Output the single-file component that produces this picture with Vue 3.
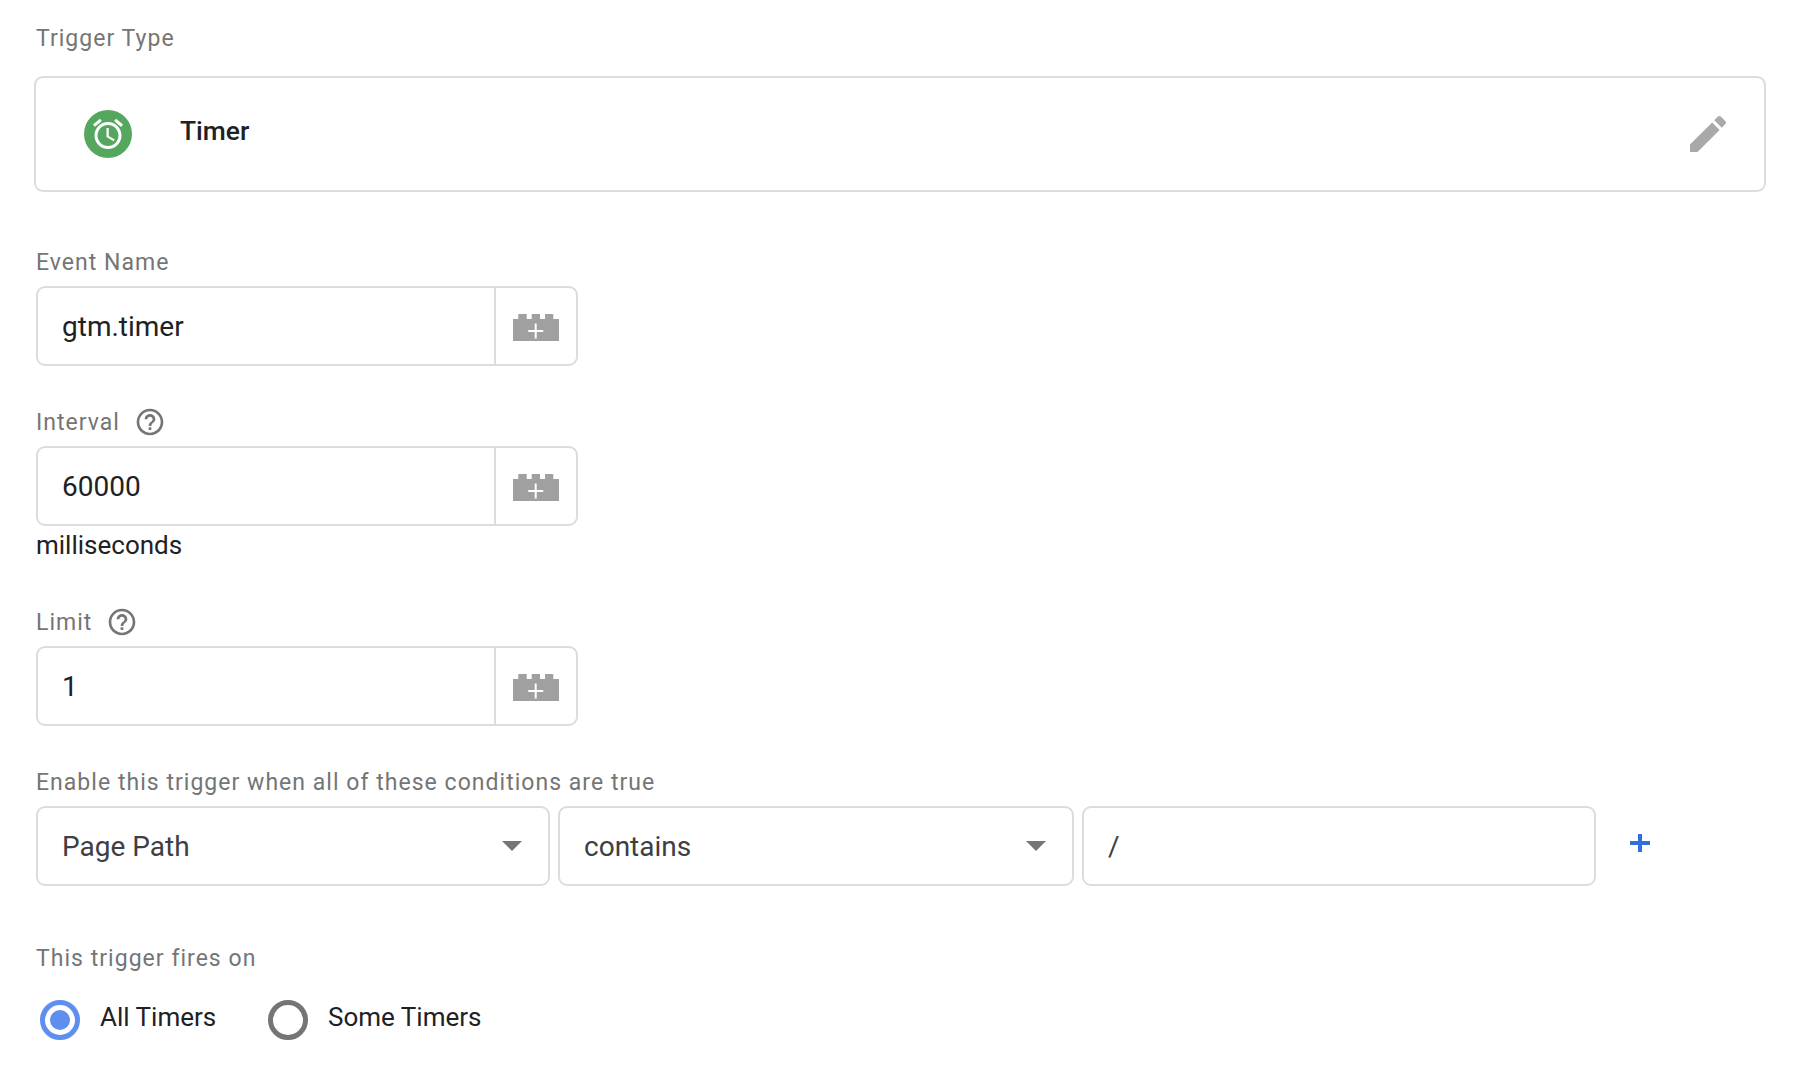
<script setup>
const helpPath = 'M11 18h2v-2h-2v2zm1-16C6.48 2 2 6.48 2 12s4.48 10 10 10 10-4.48 10-10S17.52 2 12 2zm0 18c-4.41 0-8-3.59-8-8s3.59-8 8-8 8 3.59 8 8-3.59 8-8 8zm0-14c-2.21 0-4 1.79-4 4h2c0-1.1.9-2 2-2s2 .9 2 2c0 2-3 1.75-3 5h2c0-2.25 3-2.5 3-5 0-2.21-1.79-4-4-4z'
const fields = [
  { key: 'event', label: 'Event Name', value: 'gtm.timer', help: false },
  { key: 'interval', label: 'Interval', value: '60000', help: true, note: 'milliseconds' },
  { key: 'limit', label: 'Limit', value: '1', help: true }
]
</script>

<template>
  <div class="page">
    <div class="label first">Trigger Type</div>
    <div class="card">
      <div class="badge">
        <svg width="36" height="36" viewBox="0 0 24 24" fill="#fff"><path d="M22 5.72l-4.6-3.86-1.29 1.53 4.6 3.86L22 5.72zM7.88 3.39L6.6 1.86 2 5.71l1.29 1.53 4.59-3.85zM12.5 8H11v6l4.75 2.85.75-1.23-4-2.37V8zM12 4c-4.97 0-9 4.03-9 9s4.02 9 9 9c4.97 0 9-4.03 9-9s-4.03-9-9-9zm0 16c-3.87 0-7-3.13-7-7s3.13-7 7-7 7 3.13 7 7-3.13 7-7 7z"/></svg>
      </div>
      <div class="card-title">Timer</div>
      <svg class="pencil" width="48" height="48" viewBox="0 0 24 24" fill="#a9a9a9"><path d="M3 17.25V21h3.75L17.81 9.94l-3.75-3.75L3 17.25zM20.71 7.04a1 1 0 0 0 0-1.41l-2.34-2.34a1 1 0 0 0-1.41 0l-1.83 1.83 3.75 3.75 1.83-1.83z"/></svg>
    </div>

    <div v-for="f in fields" :key="f.key" class="field" :class="f.key">
      <div class="label with-help">
        <span class="label-text">{{ f.label }}</span>
        <svg v-if="f.help" class="help" width="32" height="32" viewBox="0 0 24 24" fill="#757575"><path :d="helpPath"/></svg>
      </div>
      <div class="box var-box">
        <div class="value">{{ f.value }}</div>
        <div class="brick-cell">
          <svg width="46" height="27" viewBox="0 0 46 27">
            <path fill="#a0a0a0" d="M0 5h5.300V0h8.400v5h5V0H27v5h5V0h8.300v5H46v22H0z"/>
            <path fill="none" stroke="#fff" stroke-width="2" d="M15.200 17h15M22.700 9.500v15"/>
          </svg>
        </div>
      </div>
      <div v-if="f.note" class="note">{{ f.note }}</div>
    </div>

    <div class="label enable">Enable this trigger when all of these conditions are true</div>
    <div class="cond-row">
      <div class="box select s1"><span class="select-text">Page Path</span><i class="arrow"></i></div>
      <div class="box select s2"><span class="select-text">contains</span><i class="arrow"></i></div>
      <div class="box select s3"><span class="select-text">/</span></div>
      <svg class="plus" width="20" height="18" viewBox="0 0 20 18"><path fill="#2f6fe0" d="M8 0h4v7h8v4h-8v7H8v-7H0V7h8z"/></svg>
    </div>

    <div class="label fires">This trigger fires on</div>
    <div class="radios">
      <div class="radio-item"><span class="radio on"><span class="dot"></span></span><span class="radio-label">All Timers</span></div>
      <div class="radio-item"><span class="radio"></span><span class="radio-label">Some Timers</span></div>
    </div>
  </div>
</template>

<style>
html, body { margin: 0; background: #fff; }
</style>

<style scoped>
.page {
  width: 1800px;
  height: 1070px;
  box-sizing: border-box;
  padding: 24px 0 0 36px;
  font-family: Roboto, "Liberation Sans", sans-serif;
  color: #202124;
  overflow: hidden;
}
.label {
  height: 28px;
  line-height: 30px;
  font-size: 23px;
  letter-spacing: 1.03px;
  color: #757575;
}
.with-help { display: flex; align-items: center; }
.label-text { padding-top: 2px; }
.help { margin-left: 14px; }
.card {
  margin: 24px 0 0 -2px;
  width: 1732px;
  height: 116px;
  box-sizing: border-box;
  border: 2px solid #dadce0;
  border-radius: 9px;
  display: flex;
  align-items: center;
  padding: 0 32px 0 48px;
}
.badge {
  width: 48px;
  height: 48px;
  border-radius: 50%;
  background: #55a75f;
  display: flex;
  align-items: center;
  justify-content: center;
}
.card-title {
  margin: -6px 0 0 48px;
  font-size: 26.4px;
  font-weight: 500;
  flex: 1;
}
.field { margin-top: 42px; }
.field.event { margin-top: 56px; }
.field.limit { margin-top: 49px; }
.box {
  box-sizing: border-box;
  border: 2px solid #dadce0;
  border-radius: 9px;
  height: 80px;
  font-size: 28px;
  background: #fff;
}
.var-box {
  margin-top: 10px;
  width: 542px;
  display: flex;
}
.value {
  flex: 1;
  padding-left: 24px;
  line-height: 78px;
}
.brick-cell {
  width: 82px;
  border-left: 2px solid #dadce0;
  display: flex;
  align-items: center;
  justify-content: center;
  padding-top: 3px;
  box-sizing: border-box;
}
.note {
  margin-top: 5px;
  height: 28px;
  line-height: 28px;
  font-size: 26px;
}
.enable { margin-top: 42px; }
.cond-row {
  margin-top: 10px;
  display: flex;
  align-items: center;
}
.select {
  display: flex;
  align-items: center;
  padding: 0 24px;
  color: #3c4043;
}
.s1 { width: 514px; }
.s2 { width: 516px; margin-left: 8px; }
.s3 { width: 514px; margin-left: 8px; }
.select-text { flex: 1; }
.arrow {
  width: 0;
  height: 0;
  border-left: 10px solid transparent;
  border-right: 10px solid transparent;
  border-top: 10px solid #757575;
  margin-right: 2px;
}
.plus { margin: -6px 0 0 34px; }
.fires { margin-top: 58px; }
.radios {
  margin-top: 28px;
  display: flex;
  margin-left: 4px;
}
.radio-item {
  display: flex;
  align-items: center;
  width: 228px;
}
.radio {
  width: 40px;
  height: 40px;
  box-sizing: border-box;
  border: 5px solid #757575;
  border-radius: 50%;
  display: flex;
  align-items: center;
  justify-content: center;
}
.radio.on { border-color: #5f8fee; }
.dot {
  width: 20px;
  height: 20px;
  border-radius: 50%;
  background: #5f8fee;
}
.radio-label {
  margin: -6px 0 0 20px;
  font-size: 26px;
}
</style>
